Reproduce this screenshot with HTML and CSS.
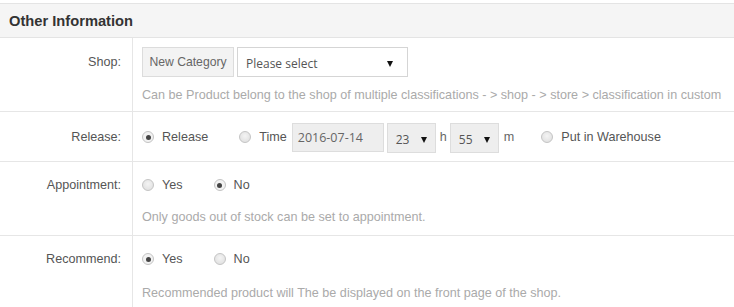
FILE: index.html
```html
<!DOCTYPE html>
<html>
<head>
<meta charset="utf-8">
<link rel="stylesheet" href="styles.css">
</head>
<body>
<div class="panel">
  <div class="panel-head">Other Information</div>

  <div class="row row-shop">
    <div class="label"><span class="label-line tall">Shop:</span></div>
    <div class="field">
      <div class="line">
        <span class="btn">New Category</span>
        <span class="select wide"><span class="sel-text">Please select</span><span class="arrow"></span></span>
      </div>
      <div class="help">Can be Product belong to the shop of multiple classifications - &gt; shop - &gt; store &gt; classification in custom</div>
    </div>
  </div>

  <div class="row row-release">
    <div class="label"><span class="label-line tall">Release:</span></div>
    <div class="field">
      <div class="line">
        <span class="opt"><span class="radio on"></span>Release</span>
        <span class="opt opt-time"><span class="radio"></span>Time</span>
        <span class="date">2016-07-14</span>
        <span class="select small"><span class="sel-text">23</span><span class="arrow"></span></span>
        <span class="unit">h</span>
        <span class="select small"><span class="sel-text">55</span><span class="arrow"></span></span>
        <span class="unit unit-m">m</span>
        <span class="opt"><span class="radio"></span>Put in Warehouse</span>
      </div>
    </div>
  </div>

  <div class="row row-radio">
    <div class="label"><span class="label-line">Appointment:</span></div>
    <div class="field">
      <div class="line short">
        <span class="opt"><span class="radio"></span>Yes</span>
        <span class="opt"><span class="radio on"></span>No</span>
      </div>
      <div class="help">Only goods out of stock can be set to appointment.</div>
    </div>
  </div>

  <div class="row row-radio last">
    <div class="label"><span class="label-line">Recommend:</span></div>
    <div class="field">
      <div class="line short">
        <span class="opt"><span class="radio on"></span>Yes</span>
        <span class="opt"><span class="radio"></span>No</span>
      </div>
      <div class="help">Recommended product will The be displayed on the front page of the shop.</div>
    </div>
  </div>
</div>
</body>
</html>
```

FILE: styles.css
```css
* { box-sizing: border-box; }
html, body { margin: 0; padding: 0; background: #fff; }
body {
  font-family: "Liberation Sans", Arial, sans-serif;
  font-size: 12.6px;
  color: #555;
}
.panel {
  margin-top: 3px;
  width: 734px;
}
.panel-head {
  height: 35px;
  line-height: 35px;
  background: #f5f5f5;
  border-top: 1px solid #e4e4e4;
  border-bottom: 1px solid #e4e4e4;
  padding-left: 9px;
  font-weight: bold;
  font-size: 14.7px;
  color: #333;
}
.row {
  display: grid;
  grid-template-columns: 133px 1fr;
  border-bottom: 1px solid #e6e6e6;
}
.label {
  border-right: 1px solid #e6e6e6;
  text-align: right;
  padding-right: 11px;
  color: #555;
}
.field {
  padding-left: 9px;
}
.row-shop .label, .row-shop .field { padding-top: 9px; }
.row-shop { height: 74px; }
.row-release { height: 50px; }
.row-release .label, .row-release .field { padding-top: 10px; }
.row-radio { height: 74px; }
.row-radio .label, .row-radio .field { padding-top: 11px; }
.row-radio.last { height: 72px; border-bottom: none; }
.label-line { display: block; line-height: 24px; }
.label-line.tall { line-height: 30px; }

.line {
  display: flex;
  align-items: center;
  height: 30px;
}
.line.short { height: 24px; }

.btn {
  display: inline-flex;
  align-items: center;
  justify-content: center;
  width: 92px;
  height: 30px;
  background: #f3f3f3;
  border: 1px solid #dcdcdc;
  color: #666;
  font-size: 12.2px;
  margin-right: 3px;
  white-space: nowrap;
}
.select {
  position: relative;
  display: inline-flex;
  align-items: center;
  height: 30px;
  border: 1px solid #d5d5d5;
  background: #fff;
  font-family: "Open Sans", "DejaVu Sans", sans-serif;
  font-size: 12px;
  color: #555;
}
.select.wide { width: 171px; padding-left: 8px; }
.select.small {
  width: 49px;
  padding-left: 8px;
  background: #eeeeee;
  border-color: #dddddd;
  margin-top: 2px;
}
.sel-text { padding-top: 2px; }
.arrow {
  position: absolute;
  top: 13px;
  right: 14px;
  width: 0; height: 0;
  border-left: 3px solid transparent;
  border-right: 3px solid transparent;
  border-top: 6px solid #111;
}
.select.small .arrow { right: 8px; }

.opt {
  display: inline-flex;
  align-items: center;
  margin-right: 31px;
  color: #555;
  white-space: nowrap;
}
.opt-time { margin-right: 5px; }
.radio {
  display: inline-block;
  position: relative;
  width: 12px;
  height: 12px;
  border-radius: 50%;
  border: 1px solid #c4c4c4;
  background: radial-gradient(circle at 50% 40%, #f4f4f4 0%, #dcdcdc 100%);
  margin-right: 8px;
  flex: none;
}
.radio.on { background: #f2f2f2; }
.radio.on::after {
  content: "";
  position: absolute;
  left: 2.5px; top: 2.5px;
  width: 5px; height: 5px;
  border-radius: 50%;
  background: #444;
}
.date {
  display: inline-flex;
  align-items: center;
  width: 92px;
  height: 29px;
  padding-left: 5px;
  background: #eeeeee;
  border: 1px solid #dddddd;
  font-family: "Open Sans", "DejaVu Sans", sans-serif;
  font-size: 12.5px;
  color: #666;
  margin-right: 3px;
}
.unit { margin: 0 3px 0 4px; color: #666; }
.unit-m { margin-left: 5px; margin-right: 27px; }

.help {
  color: #aaa;
  line-height: 20px;
  margin-top: 8px;
  white-space: nowrap;
}
.row-radio .help { margin-top: 10px; }
.row-radio.last .help { margin-top: 12px; }
```
